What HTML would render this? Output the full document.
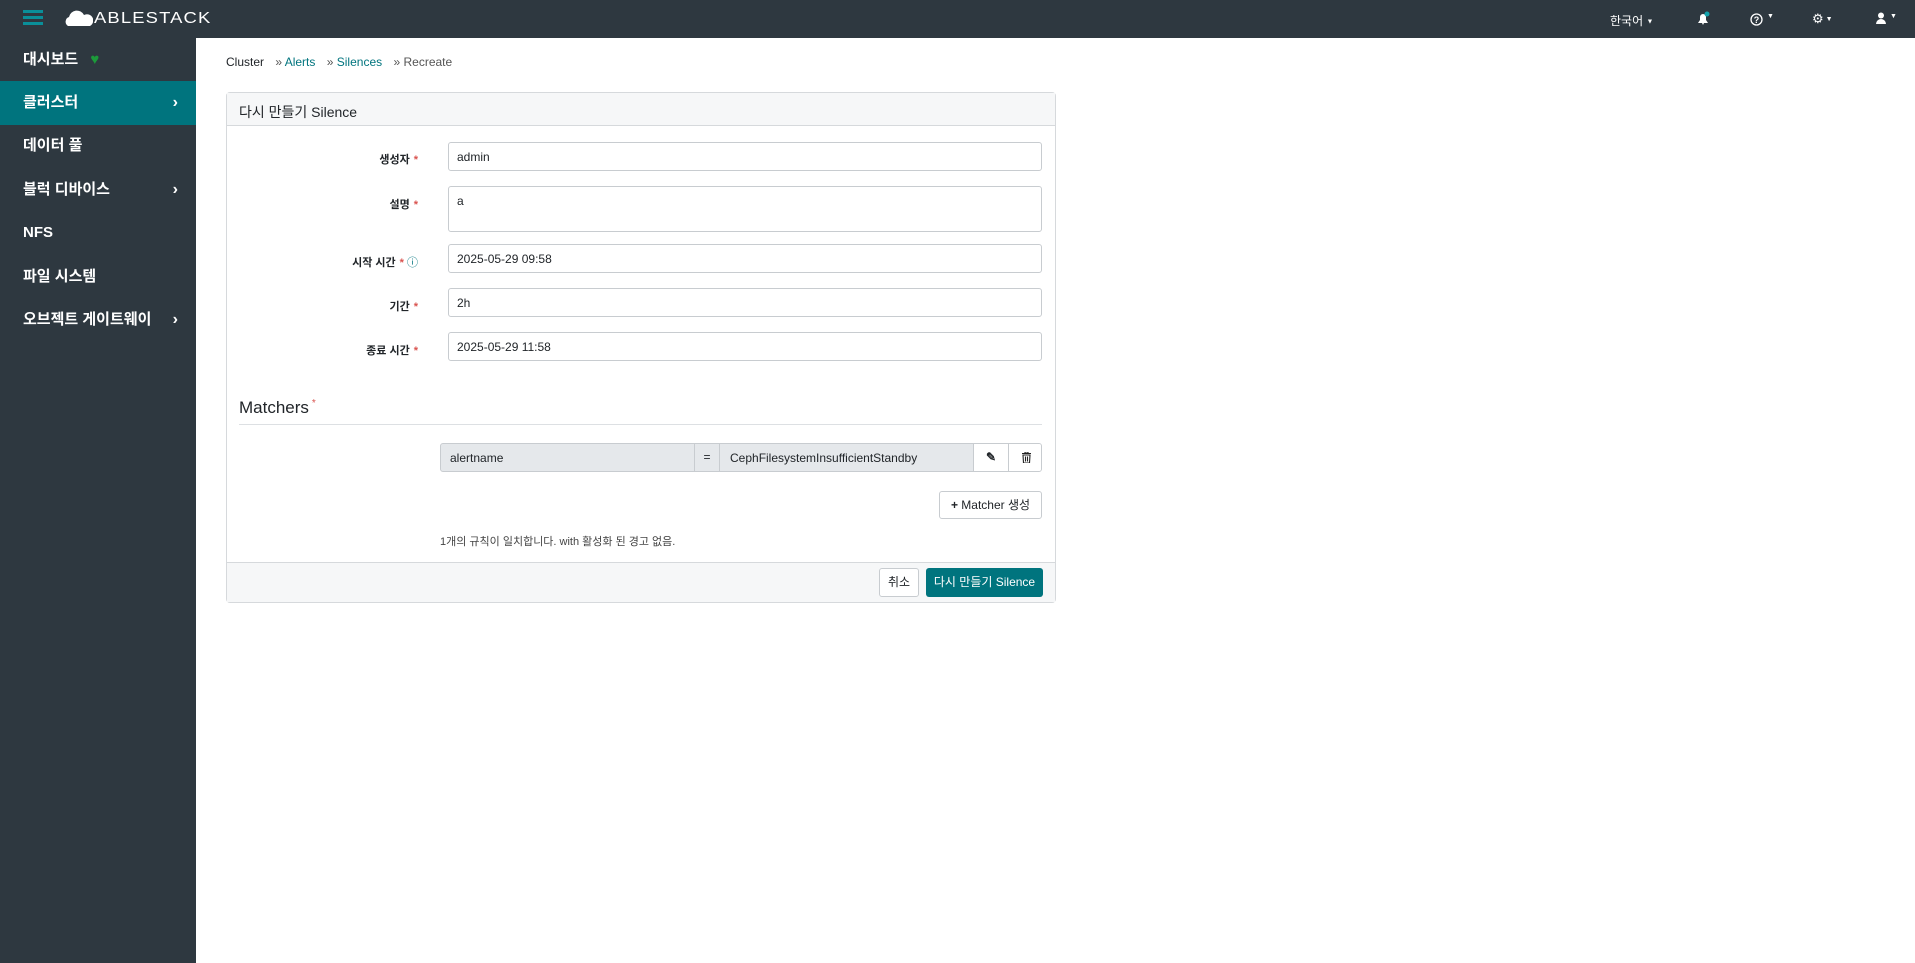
<!DOCTYPE html>
<html><head><meta charset="utf-8"><style>
*{box-sizing:border-box;margin:0;padding:0}
body{width:1915px;height:963px;overflow:hidden;font-family:"Liberation Sans","Noto Sans CJK KR",sans-serif;background:#fff;color:#212529;position:relative}
.hdr{position:absolute;left:0;top:0;width:1915px;height:38px;background:#2e3840}
.side{position:absolute;left:0;top:38px;width:196px;height:925px;background:#2e3840}
.side div{position:absolute;left:0;width:196px;height:44px;line-height:44px;padding-left:23px;color:#fff;font-size:15px;font-weight:bold}
.side .act{background:#00747e}
.chev{position:absolute;right:18px;top:0;font-size:16px}
.abs{position:absolute}
.lbl{position:absolute;right:1497px;font-size:11px;font-weight:bold;text-align:right}
.lbl b{color:#d9534f;margin-left:4px}
.inp{position:absolute;left:448px;width:594px;height:29px;border:1px solid #c8ccd0;border-radius:3px;font-size:12px;padding:7px 8px;background:#fff}
</style></head><body>
<div class="hdr">
 <div class="abs" style="left:23px;top:10px;width:20px;height:3px;background:#0a8f99"></div>
 <div class="abs" style="left:23px;top:16px;width:20px;height:3px;background:#0a8f99"></div>
 <div class="abs" style="left:23px;top:22px;width:20px;height:3px;background:#0a8f99"></div>
 <svg class="abs" style="left:65px;top:10px" width="28" height="16"><path d="M3 16 A5 5 0 0 1 4 7 A8 8 0 0 1 19 5 A6 6 0 0 1 25 16 Z" fill="#fff"/></svg>
 <div class="abs" style="left:94px;top:10px;color:#fff;font-size:16px;letter-spacing:1px;transform:scaleX(1.15);transform-origin:left">ABLESTACK</div>
 <div class="abs" style="left:1610px;top:12px;color:#fff;font-size:12px">한국어 <span style="font-size:7px;vertical-align:middle">▼</span></div>
 <svg class="abs" style="left:1696px;top:11px" width="14" height="14"><path d="M2 12 L4 9 L4 6 A3 3 0 0 1 10 6 L10 9 L12 12 Z M6 12 L8 12 L7 14 Z" fill="#fff"/><circle cx="11" cy="3" r="2.5" fill="#14a3ad"/></svg>
 <svg class="abs" style="left:1750px;top:13px" width="13" height="13"><circle cx="6.5" cy="6.5" r="5.5" stroke="#fff" stroke-width="1.3" fill="none"/><text x="6.5" y="10" font-size="9" font-family="Liberation Sans" fill="#fff" text-anchor="middle" font-weight="bold">?</text></svg>
 <div class="abs" style="left:1767px;top:13px;color:#fff;font-size:7px">▼</div>
 <div class="abs" style="left:1812px;top:11px;color:#fff;font-size:13px">⚙<span style="font-size:7px;vertical-align:middle"> ▼</span></div>
 <svg class="abs" style="left:1876px;top:12px" width="10" height="12"><circle cx="5" cy="3.5" r="3" fill="#fff"/><path d="M0 12 A5 5 0 0 1 10 12 Z" fill="#fff"/></svg>
 <div class="abs" style="left:1890px;top:13px;color:#fff;font-size:7px">▼</div>
</div>
<div class="side">
 <div style="top:0">대시보드 <span style="color:#1c9a3a;margin-left:8px">♥</span></div>
 <div class="act" style="top:43px">클러스터<span class="chev">›</span></div>
 <div style="top:86px">데이터 풀</div>
 <div style="top:130px">블럭 디바이스<span class="chev">›</span></div>
 <div style="top:173px">NFS</div>
 <div style="top:217px">파일 시스템</div>
 <div style="top:260px">오브젝트 게이트웨이<span class="chev">›</span></div>
</div>
<div class="abs" style="left:226px;top:55px;font-size:12px">Cluster <span style="color:#555;margin-left:8px">»</span> <span style="color:#00747e">Alerts</span> <span style="color:#555;margin-left:8px">»</span> <span style="color:#00747e">Silences</span> <span style="color:#555;margin-left:8px">»</span> <span style="color:#555">Recreate</span></div>
<div class="abs" style="left:226px;top:92px;width:830px;height:511px;border:1px solid #d6d9dc;border-radius:4px"></div>
<div class="abs" style="left:227px;top:93px;width:828px;height:33px;background:#f6f7f8;border-bottom:1px solid #d6d9dc;font-size:14px;padding:9px 12px">다시 만들기 Silence</div>
<div class="lbl" style="top:151px">생성자<b>*</b></div>
<div class="inp" style="top:142px">admin</div>
<div class="lbl" style="top:196px">설명<b>*</b></div>
<div class="inp" style="top:186px;height:46px">a</div>
<div class="lbl" style="top:254px;right:1497px">시작 시간<b>*</b> <span style="color:#00747e;font-weight:normal">ⓘ</span></div>
<div class="inp" style="top:244px">2025-05-29 09:58</div>
<div class="lbl" style="top:298px">기간<b>*</b></div>
<div class="inp" style="top:288px">2h</div>
<div class="lbl" style="top:342px">종료 시간<b>*</b></div>
<div class="inp" style="top:332px">2025-05-29 11:58</div>
<div class="abs" style="left:239px;top:398px;font-size:17px">Matchers<span style="color:#d9534f;font-size:10px;margin-left:3px;vertical-align:top">*</span></div>
<div class="abs" style="left:239px;top:424px;width:803px;height:1px;background:#dde0e3"></div>
<div class="abs" style="left:440px;top:443px;width:602px;height:29px;border:1px solid #c8ccd0;border-radius:3px;background:#e5e8eb;font-size:12px;overflow:hidden">
 <span class="abs" style="left:9px;top:7px">alertname</span>
 <span class="abs" style="left:253px;top:0;width:26px;height:29px;border-left:1px solid #c8ccd0;border-right:1px solid #c8ccd0;text-align:center;line-height:27px">=</span>
 <span class="abs" style="left:289px;top:7px">CephFilesystemInsufficientStandby</span>
 <span class="abs" style="left:532px;top:0;width:35px;height:29px;background:#fff;border-left:1px solid #c8ccd0;text-align:center;line-height:27px;font-weight:bold">✎</span>
 <span class="abs" style="left:567px;top:0;width:35px;height:29px;background:#fff;border-left:1px solid #c8ccd0"><svg style="position:absolute;left:13px;top:8px" width="9" height="11"><path d="M0 1.5 H9 M3 1.5 V0 H6 V1.5 M1 3 H8 L7.5 11 H1.5 Z M3.5 4.5 V9.5 M5.5 4.5 V9.5" stroke="#222" stroke-width="1.1" fill="none"/></svg></span>
</div>
<div class="abs" style="left:939px;top:491px;width:103px;height:28px;border:1px solid #c8ccd0;border-radius:3px;font-size:12px;text-align:center;line-height:26px"><b>+</b> Matcher 생성</div>
<div class="abs" style="left:440px;top:533px;font-size:11px;color:#444">1개의 규칙이 일치합니다. with 활성화 된 경고 없음.</div>
<div class="abs" style="left:227px;top:562px;width:828px;height:40px;background:#f6f7f8;border-top:1px solid #d6d9dc"></div>
<div class="abs" style="left:879px;top:568px;width:40px;height:29px;border:1px solid #c8ccd0;border-radius:3px;background:#fff;font-size:12px;text-align:center;line-height:27px">취소</div>
<div class="abs" style="left:926px;top:568px;width:117px;height:29px;border-radius:3px;background:#00747e;color:#fff;font-size:12px;text-align:center;line-height:29px">다시 만들기 Silence</div>
</body></html>
